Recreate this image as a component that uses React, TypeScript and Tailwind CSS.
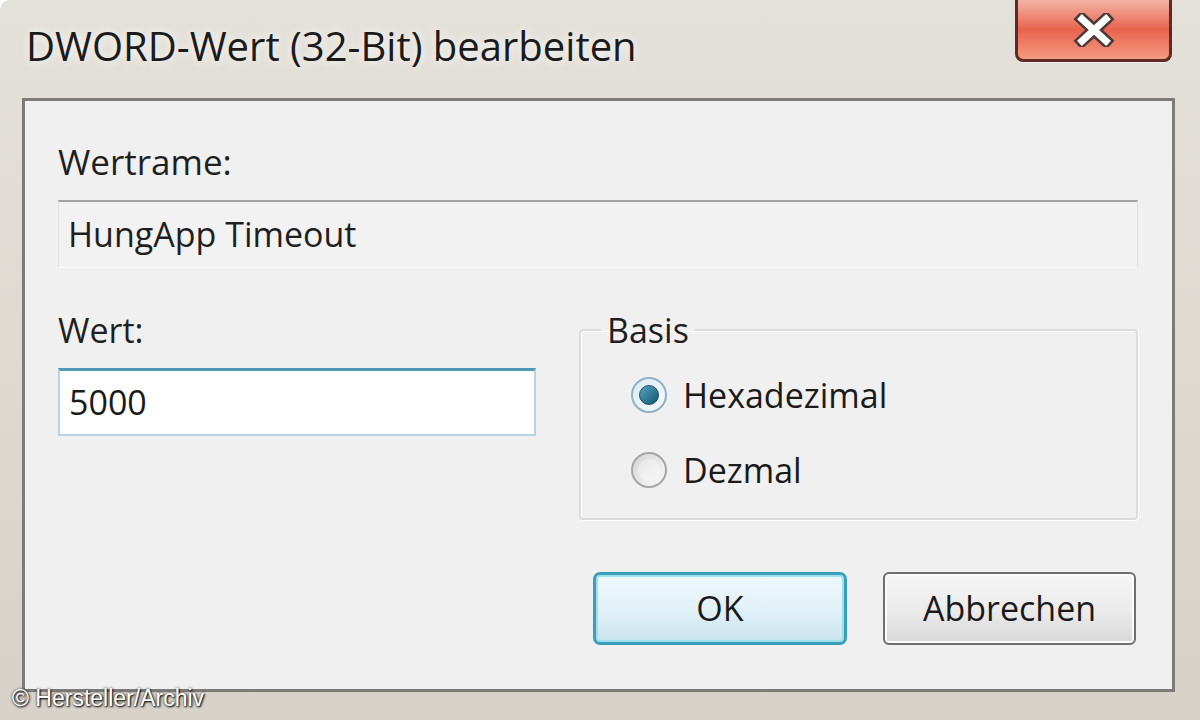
import React from "react";

const font = { fontFamily: '"Open Sans", "Noto Sans", "DejaVu Sans", sans-serif' };

function CloseButton() {
  return (
    <div className="h-[62px] w-[157px] shrink-0 rounded-b-[8px] border-[3px] border-t-0 border-[#5e2a22] bg-gradient-to-b from-[#f2b3a6] via-[#e8624e] to-[#f29a80] flex items-center justify-center shadow-[0_1px_0_#f7ede8]">
      <svg width="46" height="34" viewBox="0 0 46 34">
        <path d="M11 6 L35 28 M35 6 L11 28" stroke="#4a3a36" strokeWidth="12" strokeLinecap="square" />
        <path d="M11 6 L35 28 M35 6 L11 28" stroke="#ffffff" strokeWidth="7" strokeLinecap="square" />
      </svg>
    </div>
  );
}

function Radio({ checked, label }: { checked?: boolean; label: string }) {
  return (
    <label className="flex items-center h-[46px]">
      <span
        className={`w-[36px] h-[36px] rounded-full flex items-center justify-center border-2 ${
          checked
            ? "border-[#8fb3c6] bg-gradient-to-br from-[#dbeaf2] to-[#f6fbfd]"
            : "border-[#a6a6a6] bg-gradient-to-br from-[#d4d4d4] to-[#fbfbfb]"
        }`}
      >
        {checked ? (
          <span className="w-[20px] h-[20px] rounded-full bg-gradient-to-br from-[#5aa6c4] to-[#0f5570] border border-[#1b4b60]" />
        ) : (
          <span className="w-[22px] h-[22px] rounded-full bg-gradient-to-br from-[#e6e6e6] to-[#f8f8f8]" />
        )}
      </span>
      <span className="ml-[16px] text-[34px] text-[#1a1a1a] leading-[46px]">{label}</span>
    </label>
  );
}

export default function App() {
  return (
    <div
      className="relative w-[1200px] h-[720px] overflow-hidden bg-gradient-to-b from-[#e4e1da] via-[#dedad2] to-[#d6d2c9] rounded-tl-[10px]"
      style={font}
    >
      {/* Title bar */}
      <div className="flex items-start h-[98px] pr-[28px]">
        <div className="flex-1 pl-[26px] pt-[20px] text-[40px] leading-[52px] text-[#1b1b1b] [text-shadow:0_0_8px_#ffffff]">
          DWORD-Wert (32-Bit) bearbeiten
        </div>
        <CloseButton />
      </div>

      {/* Client area */}
      <div className="ml-[22px] mr-[25px] h-[594px] border-[3px] border-[#7d7b77] bg-[#f0f0f0] pt-[38px] pl-[33px] pr-[34px]">
        <div className="text-[35px] leading-[46px] text-[#1f1f1f]">Wertrame:</div>
        <div className="mt-[15px] h-[68px] border-t-2 border-[#a3a3a3] border-x border-x-[#e2e2e2] border-b border-b-[#fbfbfb] bg-[#f2f2f2] flex items-center pl-[9px] text-[34px] text-[#1f1f1f]">
          HungApp Timeout
        </div>

        <div className="mt-[39px] flex items-start">
          <div className="w-[478px]">
            <div className="text-[34px] leading-[46px] text-[#1f1f1f]">Wert:</div>
            <div className="mt-[15px] h-[68px] bg-white border-2 border-t-[3px] border-[#b8d4e4] border-t-[#4f98b6] flex items-center pl-[9px] text-[34px] text-[#1a1a1a]">
              5000
            </div>
          </div>
          <fieldset className="ml-[43px] flex-1 h-[213px] border-2 border-[#dcdcdc] rounded-[4px] shadow-[inset_1px_1px_0_#ffffff,1px_1px_0_#ffffff]">
            <legend className="ml-[20px] px-[6px] text-[34px] leading-[46px] text-[#1f1f1f]">Basis</legend>
            <div className="pl-[50px] pt-[19px]">
              <Radio checked label="Hexadezimal" />
              <div className="mt-[29px]">
                <Radio label="Dezmal" />
              </div>
            </div>
          </fieldset>
        </div>

        <div className="mt-[52px] flex justify-end gap-[36px] pr-[2px]">
          <button className="w-[254px] h-[73px] rounded-[7px] border-[3px] border-[#3a9fba] bg-gradient-to-b from-[#eef8fc] via-[#e2f1f8] to-[#c9e4ef] shadow-[inset_0_0_0_2px_#9fe0f0] text-[34px] text-[#1a1a1a]">
            OK
          </button>
          <button className="w-[253px] h-[73px] rounded-[6px] border-2 border-[#6f6f6f] bg-gradient-to-b from-[#f6f6f6] via-[#ececec] to-[#d8d8d8] shadow-[inset_0_0_0_2px_#fbfbfb] text-[34px] text-[#1a1a1a]">
            Abbrechen
          </button>
        </div>
      </div>

      {/* Watermark */}
      <div
        className="absolute left-[12px] bottom-[7px] text-[23px] leading-[30px] text-white [text-shadow:1px_1px_2px_#000000,0_0_3px_#333333]"
        style={{ fontFamily: '"Liberation Sans", Arial, sans-serif' }}
      >
        © Hersteller/Archiv
      </div>
    </div>
  );
}
